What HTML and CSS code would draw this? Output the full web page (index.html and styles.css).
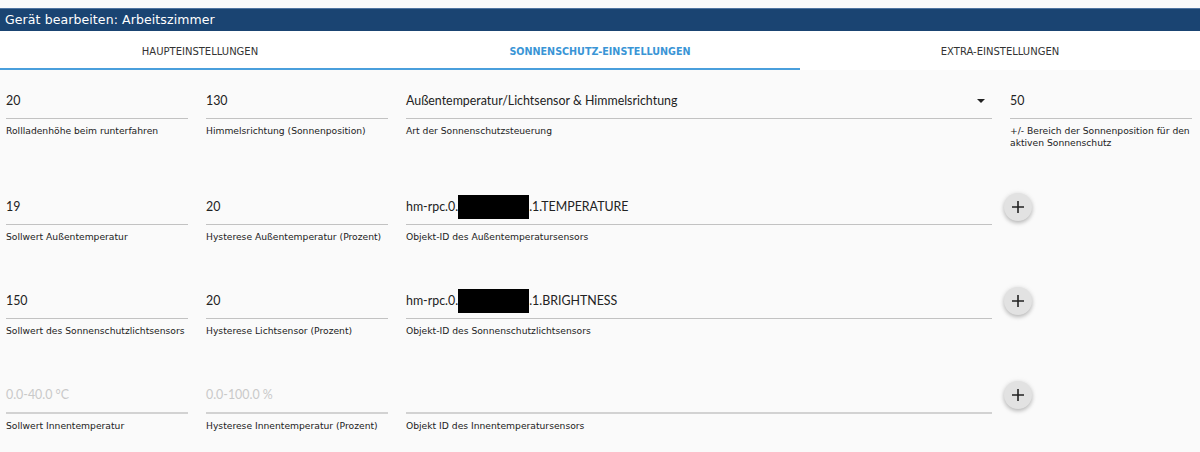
FILE: index.html
```html
<!DOCTYPE html>
<html lang="de">
<head>
    <meta charset="UTF-8">
    <title>Gerät bearbeiten</title>
    <link rel="stylesheet" href="styles.css">
</head>
<body>
    <div class="dialog">
        <div class="titlebar">Gerät bearbeiten: Arbeitszimmer</div>
        <div class="tabs">
            <div class="tab">Haupteinstellungen</div>
            <div class="tab active">Sonnenschutz-Einstellungen</div>
            <div class="tab">Extra-Einstellungen</div>
        </div>
        <div class="content">
            <!-- row 1 -->
            <div class="field">
                <div class="value">20</div>
                <div class="label">Rollladenhöhe beim runterfahren</div>
            </div>
            <div class="field">
                <div class="value">130</div>
                <div class="label">Himmelsrichtung (Sonnenposition)</div>
            </div>
            <div class="field">
                <div class="value select">Außentemperatur/Lichtsensor &amp; Himmelsrichtung<span class="caret"></span></div>
                <div class="label">Art der Sonnenschutzsteuerung</div>
            </div>
            <div class="field">
                <div class="value">50</div>
                <div class="label">+/- Bereich der Sonnenposition für den aktiven Sonnenschutz</div>
            </div>

            <!-- row 2 -->
            <div class="field">
                <div class="value">19</div>
                <div class="label">Sollwert Außentemperatur</div>
            </div>
            <div class="field">
                <div class="value">20</div>
                <div class="label">Hysterese Außentemperatur (Prozent)</div>
            </div>
            <div class="field">
                <div class="value">hm-rpc.0.<span class="redacted"></span>.1.TEMPERATURE</div>
                <div class="label">Objekt-ID des Außentemperatursensors</div>
            </div>
            <div class="action">
                <button class="fab"><svg width="14" height="14" viewBox="0 0 14 14"><path d="M7 1v12M1 7h12" stroke="#222" stroke-width="1.6"/></svg></button>
            </div>

            <!-- row 3 -->
            <div class="field">
                <div class="value">150</div>
                <div class="label">Sollwert des Sonnenschutzlichtsensors</div>
            </div>
            <div class="field">
                <div class="value">20</div>
                <div class="label">Hysterese Lichtsensor (Prozent)</div>
            </div>
            <div class="field">
                <div class="value">hm-rpc.0.<span class="redacted"></span>.1.BRIGHTNESS</div>
                <div class="label">Objekt-ID des Sonnenschutzlichtsensors</div>
            </div>
            <div class="action">
                <button class="fab"><svg width="14" height="14" viewBox="0 0 14 14"><path d="M7 1v12M1 7h12" stroke="#222" stroke-width="1.6"/></svg></button>
            </div>

            <!-- row 4 -->
            <div class="field">
                <div class="value empty">0.0-40.0 °C</div>
                <div class="label">Sollwert Innentemperatur</div>
            </div>
            <div class="field">
                <div class="value empty">0.0-100.0 %</div>
                <div class="label">Hysterese Innentemperatur (Prozent)</div>
            </div>
            <div class="field">
                <div class="value empty">&nbsp;</div>
                <div class="label">Objekt ID des Innentemperatursensors</div>
            </div>
            <div class="action">
                <button class="fab"><svg width="14" height="14" viewBox="0 0 14 14"><path d="M7 1v12M1 7h12" stroke="#222" stroke-width="1.6"/></svg></button>
            </div>
        </div>
    </div>
</body>
</html>
```

FILE: styles.css
```css
body {
    margin: 0;
    background-color: #fafafa;
    font-family: 'DejaVu Sans', sans-serif;
    color: #222;
}
.dialog {
    padding-top: 8px;
}
.titlebar {
    background-color: #1a4472;
    border-top: 1px solid #4f74a0;
    color: #ffffff;
    font-size: 12.5px;
    height: 22px;
    line-height: 22px;
    padding-left: 5px;
    letter-spacing: 0.1px;
}
.tabs {
    display: grid;
    grid-template-columns: 1fr 1fr 1fr;
    background: #ffffff;
    height: 39px;
}
.tab {
    display: flex;
    align-items: center;
    justify-content: center;
    padding-top: 3px;
    font-size: 10px;
    text-transform: uppercase;
    color: #333;
    border-bottom: 2px solid transparent;
}
.tab:nth-child(1),
.tab.active {
    border-bottom-color: #4a9fdc;
}
.tab.active {
    color: #3a95d6;
    font-size: 9.6px;
    font-weight: bold;
}
.content {
    display: grid;
    grid-template-columns: 182px 182px 1fr 182px;
    column-gap: 18px;
    row-gap: 48px;
    padding: 21px 8px 0 6px;
    align-items: start;
}
.field {
    display: flex;
    flex-direction: column;
}
.value {
    font-family: Lato, sans-serif;
    font-size: 12.4px;
    line-height: 20px;
    height: 20px;
    padding-bottom: 7px;
    border-bottom: 1px solid #c2c2c2;
    position: relative;
    display: flex;
    align-items: center;
}
.value.empty {
    color: #c9c9c9;
    border-bottom: 2px solid #d2d2d2;
    padding-bottom: 7px;
}
.caret {
    position: absolute;
    right: 7px;
    top: 8px;
    border-left: 4px solid transparent;
    border-right: 4px solid transparent;
    border-top: 4px solid #222;
}
.redacted {
    display: inline-block;
    width: 71px;
    height: 24px;
    margin: -2px 0;
    background: #000;
}
.label {
    font-size: 9.2px;
    line-height: 12px;
    margin-top: 6px;
}
.fab {
    width: 28px;
    height: 28px;
    margin-left: -6px;
    margin-top: -4px;
    border: none;
    border-radius: 50%;
    background: #e2e2e2;
    box-shadow: 0 2px 4px rgba(0, 0, 0, 0.25), 0 0 6px rgba(0, 0, 0, 0.06);
    display: flex;
    align-items: center;
    justify-content: center;
    padding: 0;
}
```
